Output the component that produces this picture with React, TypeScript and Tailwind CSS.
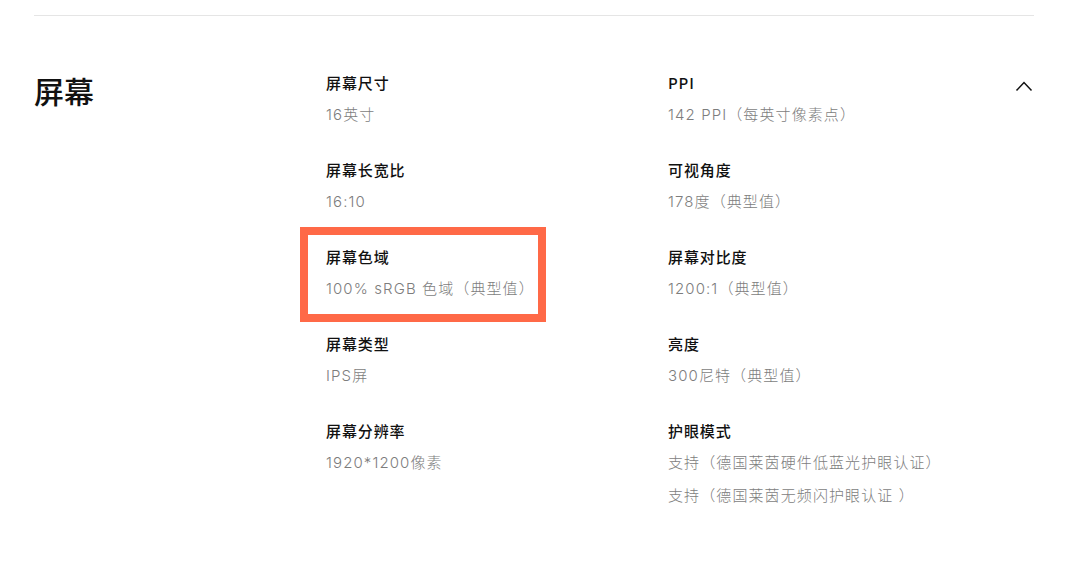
import React from "react";

type Spec = { label: string; values: string[]; highlight?: boolean };

const left: Spec[] = [
  { label: "屏幕尺寸", values: ["16英寸"] },
  { label: "屏幕长宽比", values: ["16:10"] },
  { label: "屏幕色域", values: ["100% sRGB 色域（典型值）"], highlight: true },
  { label: "屏幕类型", values: ["IPS屏"] },
  { label: "屏幕分辨率", values: ["1920*1200像素"] },
];

const right: Spec[] = [
  { label: "PPI", values: ["142 PPI（每英寸像素点）"] },
  { label: "可视角度", values: ["178度（典型值）"] },
  { label: "屏幕对比度", values: ["1200:1（典型值）"] },
  { label: "亮度", values: ["300尼特（典型值）"] },
  { label: "护眼模式", values: ["支持（德国莱茵硬件低蓝光护眼认证）", "支持（德国莱茵无频闪护眼认证 ）"] },
];

function Item({ s }: { s: Spec }) {
  return (
    <div className="relative">
      {s.highlight && (
        <div className="absolute left-[-26px] top-[-19px] w-[246px] h-[95px] border-[8px] border-[#ff6947] pointer-events-none" />
      )}
      <div className="text-[15px] leading-[22px] font-medium text-[#111] tracking-[0.9px]">{s.label}</div>
      <div
        className="mt-[10px] flex flex-col gap-[11px]"
        style={{ fontFamily: '"Inter", "Noto Sans CJK SC", sans-serif' }}
      >
        {s.values.map((v) => (
          <div key={v} className="text-[15px] leading-[22px] font-light text-[#7d7d7d] tracking-[1.1px]">
            {v}
          </div>
        ))}
      </div>
    </div>
  );
}

export default function App() {
  return (
    <div
      className="w-[1085px] h-[570px] bg-white overflow-hidden"
      style={{ fontFamily: '"Noto Sans CJK SC", "Noto Sans", sans-serif' }}
    >
      <div className="ml-[34px] w-[1000px]">
        <div className="pt-[15px] border-b border-[#e5e5e5]" />
        <div className="flex pt-[56px]">
          <div className="w-[292px] text-[30px] leading-[40px] font-medium text-[#111] mt-[-2px]">屏幕</div>
          <div className="w-[342px] flex flex-col gap-[33px]">
            {left.map((s) => (
              <Item key={s.label} s={s} />
            ))}
          </div>
          <div className="flex-1 flex flex-col gap-[33px]">
            {right.map((s) => (
              <Item key={s.label} s={s} />
            ))}
          </div>
          <div className="w-[20px] pt-[8px] pl-[1px]">
            <svg width="18" height="12" viewBox="0 0 18 12" fill="none">
              <path d="M1.5 10.5 L9 2.5 L16.5 10.5" stroke="#111" strokeWidth="1.5" />
            </svg>
          </div>
        </div>
      </div>
    </div>
  );
}
